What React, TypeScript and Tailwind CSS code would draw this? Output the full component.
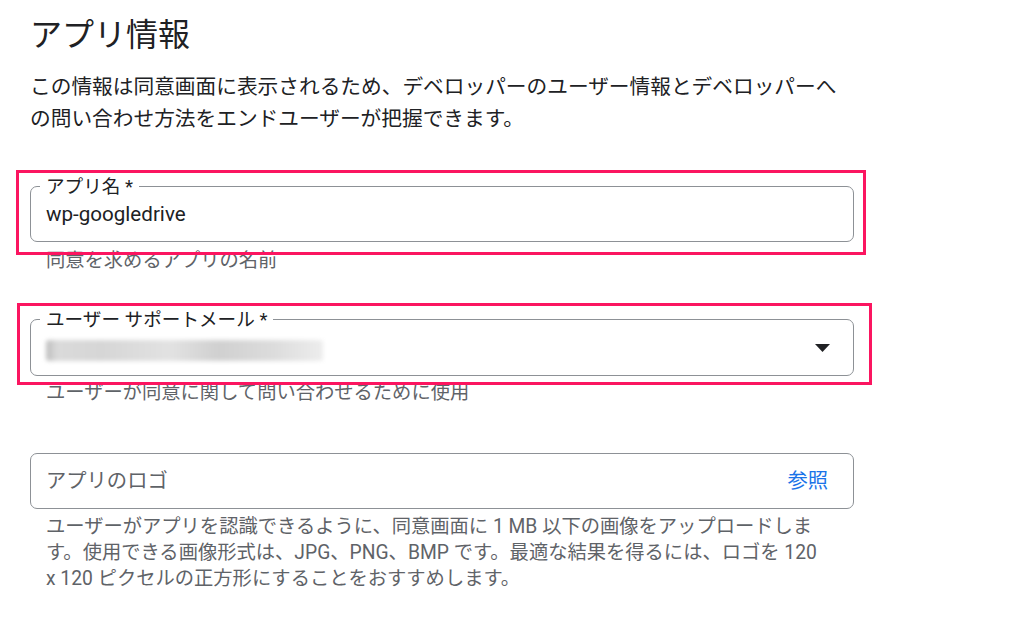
import React from "react";

const font = { fontFamily: 'Roboto, "Noto Sans CJK JP", sans-serif' };

export default function App() {
  return (
    <div
      className="min-h-[626px] w-[1024px] bg-white pl-[30px] pt-[13px] text-[#202124]"
      style={font}
    >
      <h1 className="text-[32px] font-normal leading-[44px] whitespace-nowrap">アプリ情報</h1>
      <p className="mt-[14px] text-[20.7px] leading-[32px] whitespace-nowrap">
        この情報は同意画面に表示されるため、デベロッパーのユーザー情報とデベロッパーへ
        <br />
        の問い合わせ方法をエンドユーザーが把握できます。
      </p>

      {/* Field 1 */}
      <div className="relative mt-[51px] flex h-[56px] w-[824px] items-center rounded-[7px] border-[1.5px] border-[#8d9196] px-[15px]">
        <span className="absolute left-[9px] top-0 -translate-y-1/2 bg-white px-[6px] text-[18.6px] leading-[22px] whitespace-nowrap text-[#202124]">
          アプリ名 *
        </span>
        <span className="text-[20.6px] leading-[24px] text-[#202124]">wp-googledrive</span>
        <div className="pointer-events-none absolute -left-[15.5px] -top-[17.5px] -right-[12.5px] -bottom-[13.5px] border-[3px] border-[#fb1560]" />
      </div>
      <p className="mt-[7px] pl-[16px] text-[19.3px] leading-[24px] text-[#5f6368] whitespace-nowrap">
        同意を求めるアプリの名前
      </p>

      {/* Field 2 */}
      <div className="relative mt-[46px] flex h-[57px] w-[824px] items-center rounded-[7px] border-[1.5px] border-[#8d9196] px-[15px]">
        <span className="absolute left-[9px] top-0 -translate-y-1/2 bg-white px-[6px] text-[18.6px] leading-[22px] whitespace-nowrap text-[#202124]">
          ユーザー サポートメール *
        </span>
        <div className="mt-[6px] h-[21px] w-[277px] rounded-[3px] bg-[linear-gradient(90deg,#bdbdbd,#dadada_4%,#d6d6d6_20%,#e2e2e2_45%,#d0d0d0_62%,#dcdcdc_82%,#ededed)] blur-[2px]" />
        <svg className="ml-auto mr-[8px]" width="15" height="8" viewBox="0 0 15 8">
          <polygon points="0,0 15,0 7.5,8" fill="#202124" />
        </svg>
        <div className="pointer-events-none absolute -left-[14.5px] -top-[17.5px] -right-[18.5px] -bottom-[9.5px] border-[3px] border-[#fb1560]" />
      </div>
      <p className="mt-[5px] pl-[16px] text-[19.3px] leading-[24px] text-[#5f6368] whitespace-nowrap">
        ユーザーが同意に関して問い合わせるために使用
      </p>

      {/* Field 3 */}
      <div className="mt-[48px] flex h-[56px] w-[824px] items-center rounded-[7px] border-[1.5px] border-[#8d9196] px-[15px]">
        <span className="text-[20.3px] leading-[24px] text-[#5f6368]">アプリのロゴ</span>
        <span className="ml-auto mr-[10px] text-[20.3px] leading-[24px] text-[#1a73e8]">参照</span>
      </div>
      <p className="mt-[5px] pl-[16px] text-[19.3px] leading-[26px] text-[#5f6368] whitespace-nowrap">
        ユーザーがアプリを認識できるように、同意画面に 1 MB 以下の画像をアップロードしま
        <br />
        す。使用できる画像形式は、JPG、PNG、BMP です。最適な結果を得るには、ロゴを 120
        <br />
        x 120 ピクセルの正方形にすることをおすすめします。
      </p>
    </div>
  );
}
